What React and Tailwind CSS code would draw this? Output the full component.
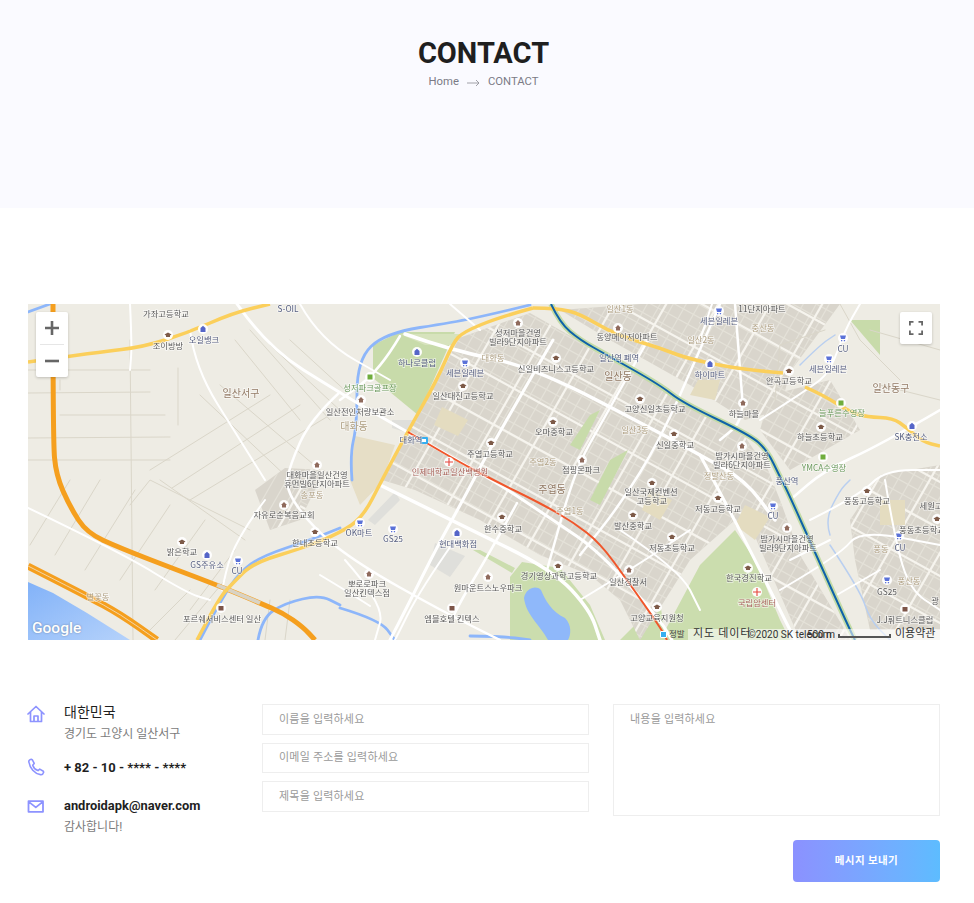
import React from "react";

const pts = (a) => a.map((p) => p.join(",")).join(" ");
const smooth = (a) => {
  let d = `M${a[0][0]},${a[0][1]}`;
  for (let i = 1; i < a.length - 1; i++) {
    const mx = (a[i][0] + a[i + 1][0]) / 2;
    const my = (a[i][1] + a[i + 1][1]) / 2;
    d += ` Q${a[i][0]},${a[i][1]} ${mx},${my}`;
  }
  const l = a[a.length - 1];
  return d + ` L${l[0]},${l[1]}`;
};

const highway = [[53,304],[53,440],[56,475],[70,507],[87,533],[120,548],[177,570],[217,585],[260,603],[283,613],[303,627],[315,640]];
const coast = [[28,566],[87,596],[120,614],[157,640]];
const yellowA = [[28,362],[100,352],[143,347],[187,333],[233,313],[270,304]];
const yellowB = [[533,308],[500,317],[463,332],[453,343],[437,380],[407,433],[382,480],[363,517],[340,533],[303,548],[253,563],[233,583],[220,597],[197,640]];
const yellowC = [[533,308],[557,308],[580,314],[607,330],[633,340],[660,348],[683,357],[717,365],[750,370],[783,373]];
const yellowD = [[805,387],[823,395],[850,412],[867,417],[893,418],[907,428],[923,442],[940,446]];
const subway = [[551,304],[560,323],[580,340],[607,355],[660,385],[683,403],[750,435],[767,450],[780,477],[787,490],[817,557],[850,630],[855,640]];
const redLine = [[408,432],[450,457],[493,480],[540,503],[573,522],[600,543],[627,580],[660,627],[667,640]];
const rivers = [
  [[200,640],[222,598],[240,572],[262,556],[310,540],[340,528]],
  [[258,640],[262,618],[285,603],[320,595],[340,605]],
  [[340,608],[380,620],[395,640]],
  [[470,636],[500,636],[530,640]],
  [[352,480],[350,455],[357,425],[357,360],[385,333],[455,322],[488,315],[530,305]],
  [[28,312],[50,304]],
  [[800,365],[820,345],[835,335]],
  [[830,535],[825,520],[840,490],[850,480]],
  [[830,545],[860,590],[870,620],[890,640]],
];
const whiteRoads = [
  [3,[[237,304],[267,347],[340,393],[407,432],[493,480],[553,520],[600,552],[660,620],[672,640]]],
  [3.5,[[405,334],[450,350],[533,367],[660,433],[700,455],[745,480],[775,520]]],
  [3.5,[[380,485],[457,523],[553,570],[590,610],[600,640]]],
  [3,[[553,340],[493,443],[463,500],[437,547],[407,607],[390,640]]],
  [2.5,[[517,503],[493,547],[463,597],[453,617]]],
  [2.5,[[648,340],[603,420],[575,470],[547,570]]],
  [2.5,[[720,304],[700,350],[660,440],[620,505],[580,555]]],
  [3,[[700,455],[735,520],[790,630],[795,640]]],
  [2.5,[[735,304],[740,370],[744,420],[720,440]]],
  [2,[[28,508],[120,552],[187,593],[210,600]]],
  [2,[[190,330],[195,368],[240,440],[265,480]]],
  [2,[[130,304],[132,345],[130,370]]],
  [2.5,[[340,392],[310,420],[290,465],[285,490],[315,530],[360,565],[440,610],[500,640]]],
  [2.5,[[400,336],[380,370],[340,400]]],
  [2,[[265,500],[250,520],[230,555],[222,590]]],
  [2.5,[[940,410],[880,445],[825,470],[790,500]]],
  [2,[[760,420],[810,388],[830,372],[845,330],[860,304]]],
  [2,[[810,520],[860,495],[885,470],[940,470]]],
  [2,[[780,590],[840,555],[860,530],[940,545]]],
  [2,[[885,480],[895,540],[910,590],[940,610]]],
  [2,[[345,560],[385,605],[375,640]]],
  [2,[[455,540],[420,590],[395,640]]],
  [2,[[320,575],[345,590],[370,606]]],
  [2,[[300,304],[320,340],[390,380]]],
  [2,[[450,304],[480,330]]],
  [2,[[620,530],[680,570],[700,610]]],
  [2,[[580,600],[630,570],[690,530]]],
  [2,[[790,560],[830,540]]],
  [2,[[835,596],[880,570]]],
  [2,[[700,340],[712,304]]],
];
const thin = [
  [[28,370],[150,370]],[[28,393],[150,392]],[[60,415],[165,415]],[[28,438],[170,437]],[[28,460],[170,460]],
  [[130,340],[133,640]],[[178,368],[178,425]],[[60,390],[60,380]],
  [[200,395],[290,480]],[[220,385],[320,470]],[[150,470],[270,395]],[[172,488],[300,405]],[[190,500],[330,415]],
  [[235,340],[300,420]],[[250,330],[330,420]],[[270,345],[345,415]],[[290,340],[350,395]],
  [[30,545],[70,480]],[[55,555],[100,480]],[[85,570],[135,490]],[[120,580],[170,505]],[[155,590],[205,520]],[[190,610],[235,550]],
  [[130,505],[150,480],[250,530]],[[160,480],[245,540]],
  [[225,580],[175,640]],[[150,630],[190,590]],[[270,600],[265,640]],[[290,600],[285,640]],
  [[840,304],[860,340],[900,380]],[[870,330],[940,350]],[[880,385],[940,400]],[[825,330],[780,345],[775,400]],
];
const labels = [
  ["가좌고등학교",166,314,"d"],["조이방방",168,346,"d"],["오일뱅크",204,340,"n"],["S-OIL",288,309,"n"],["일산서구",241,394,"b",10],
  ["일산전인처량보관소",360,412,"d"],["성저파크골프장",370,388,"g"],["대화동",354,427,"t",10],["대화역",411,440,"n"],["하나로클럽",417,363,"n"],
  ["세븐일레븐",465,373,"n"],["일산대진고등학교",463,396,"d"],["성저마을건영",518,333,"d"],["빌라9단지아파트",518,342,"d"],["대화동",493,358,"t"],
  ["신일비즈니스고등학교",556,369,"d"],["일산1동",620,309,"t"],["동양메이저아파트",627,337,"d"],["일산역 폐역",619,358,"n"],["일산동",618,377,"b",10],
  ["고양신일초등학교",655,409,"d"],["오마중학교",554,432,"d"],["일산3동",635,430,"t"],["주엽고등학교",490,454,"d"],["주엽2동",543,462,"t"],
  ["점핑몬파크",581,470,"d"],["인제대학교일산백병원",450,472,"r"],["대화마을일산건영",317,475,"d"],["휴먼빌6단지아파트",317,484,"d"],["송포동",312,495,"t"],
  ["자유로순복음교회",284,515,"d"],["한내초등학교",315,543,"d"],["밝은학교",182,552,"d"],["GS주유소",207,565,"n"],["CU",237,571,"n"],
  ["별꽃동",98,597,"t"],["포르쉐서비스센터 일산",222,619,"d"],["OK마트",359,533,"n"],["GS25",393,539,"n"],["현대백화점",458,544,"n"],
  ["뽀로로파크",367,584,"d"],["일산킨텍스점",367,593,"d"],["원마운트스노우파크",488,588,"d"],["엠블호텔 킨텍스",452,619,"d"],["한수중학교",503,529,"d"],
  ["주엽동",552,490,"b",10],["주엽1동",570,511,"t"],["일산국제컨벤션",651,492,"d"],["고등학교",652,501,"d"],["발산중학교",633,526,"d"],
  ["경기영상과학고등학교",559,576,"d"],["일산경찰서",628,582,"d"],["고양교육지원청",657,618,"d"],["저동고등학교",718,509,"d"],["저동초등학교",672,548,"d"],
  ["CU",773,516,"n"],["밤가시마을건영",787,539,"d"],["빌라9단지아파트",788,548,"d"],["한국경진학교",749,578,"d"],["국립암센터",757,603,"r"],
  ["풍동고등학교",867,501,"d"],["세원고",931,506,"d"],["풍동초등학교",922,530,"d"],["풍동",881,549,"t"],["CU",900,548,"n"],
  ["풍산동",909,581,"t"],["GS25",887,592,"d"],["광",935,601,"d"],["J.J휘트니스클럽",905,620,"d"],["11단지아파트",762,309,"d"],
  ["세븐일레븐",719,321,"n"],["중산동",763,328,"t"],["일산2동",701,340,"t"],["하이마트",710,375,"n"],["안곡고등학교",789,381,"d"],
  ["CU",843,349,"n"],["세븐일레븐",828,369,"n"],["일산동구",891,389,"b",10],["늘푸른수영장",842,413,"g"],["하늘마을",744,414,"d"],
  ["하늘초등학교",820,437,"d"],["SK충전소",911,437,"n"],["YMCA수영장",824,468,"g"],["신일중학교",675,445,"d"],["밤가시마을건영",742,456,"d"],
  ["빌라6단지아파트",742,465,"d"],["정발산동",719,476,"t"],["풍산역",787,481,"n"],
];
const labelColor = { d: "#5a5a5a", n: "#565f80", b: "#927a64", t: "#b0a184", g: "#6b9a5d", r: "#a8635a" };
const poi = {
  school: [[168,335],[463,386],[556,358],[640,399],[553,422],[491,443],[315,532],[182,542],[502,517],[633,515],[558,566],[672,537],[718,498],[748,568],[867,491],[937,519],[789,371],[821,427],[674,434],[657,607],[652,483]],
  home: [[317,465],[518,323],[618,328],[361,400],[743,403],[742,446],[787,528],[284,505],[582,460],[369,574],[488,577],[629,570]],
  shop: [[238,561],[360,523],[393,529],[465,363],[719,311],[843,338],[829,359],[773,506],[899,536],[887,580]],
  dept: [[417,352],[457,533],[710,364],[203,329],[207,555],[912,426]],
  green: [[370,377],[841,403],[823,457]],
  med: [[449,462],[757,592]],
  box: [[221,608],[905,609],[452,608]],
};
const poiColor = { school: "#7d5a48", home: "#8f6a5c", shop: "#5b72d8", dept: "#5565c8", green: "#70ad3d", box: "#7d5548" };

const grid = [];
const avenues = [];
for (let i = -40; i < 50; i++) {
  const c = i * 13;
  grid.push([300, 150 + c, 960, 150 + c + 660 * 0.55]);
  grid.push([700 + c, 280, 700 + c - 240, 700]);
}
for (let i = -8; i < 10; i++) {
  avenues.push([300, 130 + i * 47, 960, 130 + i * 47 + 363]);
  avenues.push([680 + i * 52, 280, 680 + i * 52 - 240, 700]);
}
const urban = "M459,338 L530,313 L560,330 L610,358 L660,388 L745,437 L768,470 L780,500 L800,555 L842,625 L850,640 L800,640 L750,525 L735,520 L690,560 L640,640 L620,600 L590,575 L540,555 L480,520 L415,490 L382,480 L408,432 L438,380 Z M560,310 L640,304 L840,304 L790,372 L780,410 L745,420 L690,385 L610,340 Z M880,475 L940,465 L940,630 L870,630 L855,560 L850,520 Z M770,395 L830,380 L860,430 L790,470 L760,430Z M255,490 L285,468 L325,470 L300,520 L270,530 Z";

function MapArt() {
  return (
    <svg viewBox="28 304 912 336" className="block w-full h-full blur-[0.45px]">
      <defs>
        <clipPath id="urban"><path d={urban} /></clipPath>
        <linearGradient id="sea" x1="0" y1="0" x2="1" y2="1"><stop offset="0" stopColor="#82b2f8" /><stop offset="1" stopColor="#b5d2fb" /></linearGradient>
      </defs>
      <rect x="28" y="304" width="912" height="336" fill="#eeece4" />
      <path d="M373,345 L400,332 L455,332 L418,415 L373,378 Z" fill="#c8dbaa" />
      <path d="M400,334 L460,334 L453,345 L425,345Z" fill="#d7e3bd" />
      <path d="M355,436 L395,445 L382,482 L360,505 L350,480 Z" fill="#e6dec6" />
      <path d="M392,420 L420,420 L408,433 L392,428Z M368,520 L395,492 L400,500 L375,525Z M435,543 L465,556 L450,577 L430,565Z" fill="#dfdfdb" />
      <path d="M660,640 L700,565 L735,530 L755,560 L780,620 L790,640 Z" fill="#cbddae" />
      <path d="M510,577 L522,562 L560,568 L590,605 L605,640 L510,640 Z M473,550 L480,550 L515,568 L512,573Z" fill="#cbddae" />
      <path d="M620,640 L660,600 L665,640Z" fill="#cbddae" />
      <path d={urban} fill="#d9d5cc" />
      <g clipPath="url(#urban)" fill="none">
        <g stroke="#e4e1d8" strokeWidth="1.2">
          {grid.map((g, i) => <line key={i} x1={g[0]} y1={g[1]} x2={g[2]} y2={g[3]} />)}
        </g>
        <g stroke="#f6f4ee" strokeWidth="2.2">
          {avenues.map((g, i) => <line key={i} x1={g[0]} y1={g[1]} x2={g[2]} y2={g[3]} />)}
        </g>
      </g>
      <path d="M610,460 L628,450 L600,505 L590,500Z M590,415 L600,410 L580,450 L570,445Z M850,320 L880,320 L880,355Z" fill="#c8dbaa" />
      <path d="M442,407 L468,420 L458,436 L434,425Z M650,490 L672,500 L660,520 L642,510Z M745,505 L770,517 L755,540 L735,525Z M698,380 L720,380 L715,400 L690,395Z M880,500 L905,500 L905,525 L880,525Z" fill="#e4dcc0" />
      <path d="M28,582 L53,593 L87,613 L130,640 L28,640 Z" fill="url(#sea)" />
      <g fill="none" strokeLinecap="round" strokeLinejoin="round">
        {thin.map((t, i) => <polyline key={i} points={pts(t)} stroke="#dad6c9" strokeWidth="1" />)}
        {rivers.map((r, i) => <path key={i} d={smooth(r)} stroke={i > 5 ? "#b9cff0" : "#8db6fa"} strokeWidth={i > 5 ? 1.5 : 2.8} />)}
        {whiteRoads.map(([w, r], i) => <path key={i} d={smooth(r)} stroke="#ffffff" strokeWidth={w} />)}
      </g>
      <path d="M524,598 C526,588 536,585 541,590 C545,600 552,612 565,618 C572,625 571,635 568,640 L548,640 C540,625 526,615 524,598 Z" fill="#8fb8fa" />
      <g fill="none" strokeLinejoin="round">
        <path d={smooth(subway)} stroke="#c3dba6" strokeWidth="5.5" />
        <path d={smooth(coast)} stroke="#f59f1e" strokeWidth="7" />
        <path d={smooth(coast)} stroke="#eeece4" strokeWidth="1" opacity="0.7" />
        <path d={smooth(highway)} stroke="#f59f1e" strokeWidth="5" />
        <polyline points="217,585 260,603" stroke="#d9d3c4" strokeWidth="4" />
        <path d={smooth(yellowA)} stroke="#fbcf5b" strokeWidth="3.5" />
        <path d={smooth(yellowB)} stroke="#fbcf5b" strokeWidth="3.5" />
        <path d={smooth(yellowC)} stroke="#fbcf5b" strokeWidth="3.5" />
        <path d={smooth(yellowD)} stroke="#fbcf5b" strokeWidth="3.5" />
        <path d={smooth(subway)} stroke="#0f62a8" strokeWidth="2" />
        <path d={smooth(redLine)} stroke="#f0562b" strokeWidth="2" />
      </g>
      {Object.entries(poi).map(([k, arr]) =>
        arr.map(([x, y], i) => (
          <g key={k + i}>
            <circle cx={x} cy={y} r="5" fill="#ffffff" opacity="0.95" />
            {k === "school" && <path d={`M${x - 3.5},${y - 0.5} L${x},${y - 2.5} L${x + 3.5},${y - 0.5} L${x + 2},${y + 0.5} L${x + 2},${y + 2} L${x - 2},${y + 2} L${x - 2},${y + 0.5} Z`} fill={poiColor[k]} />}
            {k === "home" && <path d={`M${x},${y - 3} L${x + 3},${y} L${x + 2},${y} L${x + 2},${y + 2.5} L${x - 2},${y + 2.5} L${x - 2},${y} L${x - 3},${y} Z`} fill={poiColor[k]} />}
            {k === "shop" && <path d={`M${x - 3},${y - 2.5} L${x + 3},${y - 2.5} L${x + 2},${y + 1} L${x - 2},${y + 1} Z M${x - 2},${y + 2} h1.3 v1.2 h-1.3 Z M${x + 0.8},${y + 2} h1.3 v1.2 h-1.3 Z`} fill={poiColor[k]} />}
            {k === "dept" && <path d={`M${x - 2.5},${y - 1} L${x},${y - 3.2} L${x + 2.5},${y - 1} L${x + 2.5},${y + 3} L${x - 2.5},${y + 3} Z`} fill={poiColor[k]} />}
            {k === "green" && <rect x={x - 2.5} y={y - 2.5} width="5" height="5" fill={poiColor[k]} />}
            {k === "box" && <rect x={x - 2.5} y={y - 2} width="5" height="4.5" fill={poiColor[k]} />}
            {k === "med" && <path d={`M${x - 4},${y} H${x + 4} M${x},${y - 4} V${y + 4}`} stroke="#e5453d" strokeWidth="1.1" />}
          </g>
        ))
      )}
      <rect x="420" y="437" width="8" height="7" rx="1" fill="#35aef0" /><rect x="422" y="439" width="4" height="3" fill="#fff" />
      <g fontFamily="'Noto Sans CJK KR','Roboto',sans-serif" textAnchor="middle" stroke="#ffffff" strokeWidth="1.6" paintOrder="stroke" strokeOpacity="0.6">
        {labels.map(([t, x, y, c, s], i) => (
          <text key={i} x={x} y={y + 3} fontSize={s || 8.3} fill={labelColor[c]}>{t}</text>
        ))}
      </g>
    </svg>
  );
}

export default function App() {
  return (
    <div className="bg-white min-h-[903px] font-['Roboto','Noto_Sans_CJK_KR',sans-serif]">
      <header className="h-[208px] bg-[#fafaff] flex flex-col items-center pt-[33px] pr-[7px]">
        <h1 className="text-[29px] leading-[40px] font-bold text-[#1f1f1f]">CONTACT</h1>
        <div className="flex items-center text-[11.3px] leading-[16px] text-[#7b7b86] mt-[1px]">
          <span>Home</span>
          <svg width="13" height="8" viewBox="0 0 13 8" fill="none" stroke="#8b8b93" strokeWidth="0.8" className="mx-[8px] mt-[2px]"><path d="M0 4 H12 M9 1 L12 4 L9 7" /></svg>
          <span>CONTACT</span>
        </div>
      </header>
      <main className="px-[28px] w-[968px] pt-[96px]">
        <div className="relative h-[336px] w-[912px] overflow-hidden bg-[#eeece4]">
          <MapArt />
          <div className="absolute left-[8px] top-[8px] w-[32px] h-[65px] bg-white rounded-[2px] shadow-[0_1px_3px_rgba(0,0,0,0.2)] flex flex-col items-center">
            <svg width="32" height="32" viewBox="0 0 32 32" fill="#666"><path d="M9 14.7h5.7V9h2.6v5.7H23v2.6h-5.7V23h-2.6v-5.7H9z" /></svg>
            <div className="w-[24px] h-px bg-[#e6e6e6]" />
            <svg width="32" height="32" viewBox="0 0 32 32" fill="#666"><path d="M9 14.7h14v2.6H9z" /></svg>
          </div>
          <div className="absolute right-[8px] top-[8px] w-[32px] h-[32px] bg-white rounded-[2px] shadow-[0_1px_3px_rgba(0,0,0,0.2)] flex items-center justify-center">
            <svg width="14" height="14" viewBox="0 0 14 14" fill="none" stroke="#666" strokeWidth="1.8"><path d="M0.9 4.5V0.9H4.5M9.5 0.9H13.1V4.5M13.1 9.5V13.1H9.5M4.5 13.1H0.9V9.5" /></svg>
          </div>
          <span className="absolute left-[4px] bottom-[2px] text-[15.5px] leading-[20px] font-medium text-white [text-shadow:0_0_2px_rgba(0,0,0,0.35)]">Google</span>
          <div className="absolute right-0 bottom-0 h-[11px] w-[252px] bg-white/55 text-[#333]">
            <span className="absolute left-[5px] top-[-2px] text-[11px] leading-[14px] tracking-[0.8px] whitespace-nowrap">지도 데이터</span>
            <span className="absolute left-[60px] top-[-1px] text-[10px] leading-[13px] whitespace-nowrap">©2020 SK telecom</span>
            <span className="absolute left-[119px] top-[-1px] text-[10px] leading-[13px] whitespace-nowrap">500 m</span>
            <div className="absolute left-[150px] top-[5px] w-[53px] h-[4px] border-x-2 border-b-2 border-[#555]" />
            <span className="absolute left-[207px] top-[-2px] text-[11px] leading-[14px] whitespace-nowrap">이용약관</span>
          </div>
          <div className="absolute left-[632px] bottom-[1px] flex items-center gap-[2px] text-[8.5px] leading-[10px] text-[#444]">
            <span className="w-[7px] h-[7px] bg-[#35aef0] rounded-[1px] border border-white" />
            <span>정발</span>
          </div>
        </div>

        <section className="mt-[64px] flex items-start">
          <div className="w-[234px] shrink-0">
            <div className="flex">
              <svg width="18" height="18" viewBox="0 0 18 18" fill="none" stroke="#8d93ff" strokeWidth="1.7" strokeLinejoin="round" strokeLinecap="round" className="mt-[1px] -ml-px mr-[19px] shrink-0">
                <path d="M1 9 L9 1.5 L17 9 M3.5 7 V16.5 H14.5 V7 M7 16.5 V11 H11 V16.5" />
              </svg>
              <div>
                <div className="text-[14px] leading-[16px] text-[#1f1f1f]">대한민국</div>
                <div className="text-[12px] leading-[16px] text-[#7b7b7b] mt-[6px]">경기도 고양시 일산서구</div>
              </div>
            </div>
            <div className="flex mt-[16px]">
              <svg width="18" height="18" viewBox="0 0 24 24" fill="none" stroke="#8d93ff" strokeWidth="2.1" strokeLinecap="round" strokeLinejoin="round" className="-ml-px mr-[19px] shrink-0">
                <path d="M2.5 5.2 C2 3.6 3.6 1.8 5.5 1.6 L7 2.2 L9.6 7.2 L7.6 9.6 C8.6 12.6 11.2 15.6 14.6 16.8 L17 14.8 L21.8 17.6 L22.2 19 C21.6 21 19.8 22.6 18 22.2 C9.8 20.8 3.8 13.6 2.5 5.2 Z" />
              </svg>
              <div className="text-[13px] leading-[18px] font-bold text-[#1f1f1f] mt-[1px]">+ 82 - 10 - **** - ****</div>
            </div>
            <div className="flex mt-[20px]">
              <svg width="18" height="13" viewBox="0 0 18 13" fill="none" stroke="#8d93ff" strokeWidth="1.8" strokeLinejoin="round" className="-ml-px mr-[19px] mt-[3px] shrink-0">
                <path d="M1.5 1.2 H16 V11.8 H1.5 Z M1.5 1.6 L8.8 7.4 L16 1.6" />
              </svg>
              <div>
                <div className="text-[12.9px] leading-[18px] font-bold text-[#1f1f1f]">androidapk@naver.com</div>
                <div className="text-[12px] leading-[16px] text-[#7b7b7b] mt-[4px]">감사합니다!</div>
              </div>
            </div>
          </div>
          <div className="w-[327px] shrink-0 flex flex-col gap-[8px]">
            <input placeholder="이름을 입력하세요" className="h-[30.5px] border border-[#eeeeee] px-[16px] text-[11px] tracking-[0.2px] outline-none placeholder:text-[#9a9a9a]" />
            <input placeholder="이메일 주소를 입력하세요" className="h-[30.5px] border border-[#eeeeee] px-[16px] text-[11px] tracking-[0.2px] outline-none placeholder:text-[#9a9a9a]" />
            <input placeholder="제목을 입력하세요" className="h-[30.5px] border border-[#eeeeee] px-[16px] text-[11px] tracking-[0.2px] outline-none placeholder:text-[#9a9a9a]" />
          </div>
          <div className="w-[327px] shrink-0 ml-[24px] flex flex-col items-end">
            <textarea placeholder="내용을 입력하세요" className="block w-full h-[112px] border border-[#eeeeee] px-[16px] py-[7px] text-[11px] tracking-[0.2px] leading-[16px] resize-none outline-none placeholder:text-[#9a9a9a]" />
            <button className="mt-[24px] w-[147px] h-[42px] rounded-[4px] bg-gradient-to-r from-[#8b91ff] to-[#5dbcff] text-white text-[10.5px] tracking-[0.4px] font-bold">메시지 보내기</button>
          </div>
        </section>
      </main>
    </div>
  );
}
